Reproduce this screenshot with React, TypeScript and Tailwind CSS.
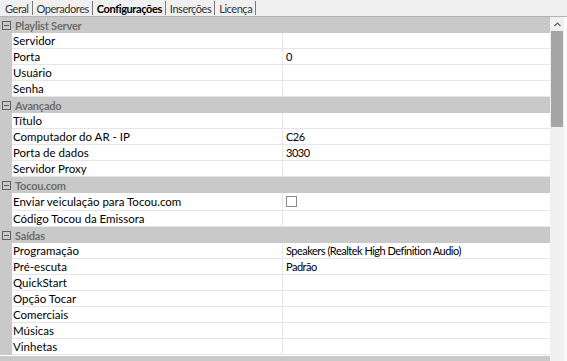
import React from 'react'

type Row = { label: string; value?: string; check?: boolean; tall?: boolean }
type Section = { title: string; rows: Row[] }

const sections: Section[] = [
  {
    title: 'Playlist Server',
    rows: [{ label: 'Servidor' }, { label: 'Porta', value: '0' }, { label: 'Usuário' }, { label: 'Senha' }],
  },
  {
    title: 'Avançado',
    rows: [
      { label: 'Título' },
      { label: 'Computador do AR - IP', value: 'C26' },
      { label: 'Porta de dados', value: '3030' },
      { label: 'Servidor Proxy' },
    ],
  },
  {
    title: 'Tocou.com',
    rows: [
      { label: 'Enviar veiculação para Tocou.com', check: true, tall: true },
      { label: 'Código Tocou da Emissora' },
    ],
  },
  {
    title: 'Saídas',
    rows: [
      { label: 'Programação', value: 'Speakers (Realtek High Definition Audio)' },
      { label: 'Pré-escuta', value: 'Padrão' },
      { label: 'QuickStart' },
      { label: 'Opção Tocar' },
      { label: 'Comerciais' },
      { label: 'Músicas' },
      { label: 'Vinhetas' },
    ],
  },
]

const tabs = ['Geral', 'Operadores', 'Configurações', 'Inserções', 'Licença']

function Collapse() {
  return (
    <svg width="9" height="9" viewBox="0 0 9 9" className="block">
      <rect x="0.5" y="0.5" width="8" height="8" fill="none" stroke="#606060" />
      <line x1="2" y1="4.5" x2="7" y2="4.5" stroke="#606060" />
    </svg>
  )
}

export default function App() {
  return (
    <div
      className="w-[567px] h-[361px] overflow-hidden bg-[#f0f0f0] text-[11.5px] leading-none text-black flex flex-col"
      style={{ fontFamily: 'Lato, "Open Sans", sans-serif' }}
    >
      {/* tabs */}
      <div className="h-[16px] flex items-center pl-[5px] shrink-0 text-[11px]">
        {tabs.map((t) => (
          <div key={t} className="flex items-center">
            <span
              className={
                t === 'Configurações'
                  ? 'font-bold tracking-[-0.4px] text-black'
                  : 'text-[#333] tracking-[-0.45px]'
              }
            >
              {t}
            </span>
            <span className="ml-[3px] mr-[4px] h-[14px] w-px bg-[#7a7a7a]" />
          </div>
        ))}
      </div>

      {/* property grid */}
      <div className="flex flex-1 border-t border-[#b4b4b4] min-h-0">
        <div className="flex-1 flex flex-col bg-white">
          {sections.map((s) => (
            <div key={s.title}>
              <div className="h-[16px] flex items-center bg-[#c9c9c9]">
                <div className="w-[12px] flex justify-center pl-[1px]">
                  <Collapse />
                </div>
                <span className="pl-[3px] text-[11px] font-bold text-[#6e6e6e] tracking-[-0.2px]">
                  {s.title}
                </span>
              </div>
              {s.rows.map((r) => (
                <div key={r.label} className={`${r.tall ? 'h-[18px]' : 'h-[16px]'} flex`}>
                  <div className="w-[12px] bg-[#c9c9c9]" />
                  <div className="w-[271px] flex items-center pl-[1px] border-b border-r border-[#e6e6e6]">
                    {r.label}
                  </div>
                  <div className="flex-1 flex items-center pl-[3px] border-b border-[#e6e6e6] text-[11px] tracking-[-0.5px]">
                    {r.check ? (
                      <span className="w-[11px] h-[11px] border border-[#8a8a8a] bg-white" />
                    ) : (
                      r.value
                    )}
                  </div>
                </div>
              ))}
            </div>
          ))}
          <div className="h-[3px]" />
          <div className="h-[16px] bg-[#c9c9c9]" />
        </div>

        {/* scrollbar */}
        <div className="w-[14px] bg-[#f0f0f0] flex flex-col items-center pt-[1px]">
          <div className="h-[13px] flex items-center justify-center">
            <svg width="7" height="5" viewBox="0 0 7 5">
              <polyline points="0.5,4 3.5,1 6.5,4" fill="none" stroke="#606060" strokeWidth="1.2" />
            </svg>
          </div>
          <div className="w-[12px] h-[96px] bg-[#a6a6a6]" />
        </div>
        <div className="w-[3px] bg-[#fafafa]" />
      </div>
    </div>
  )
}
